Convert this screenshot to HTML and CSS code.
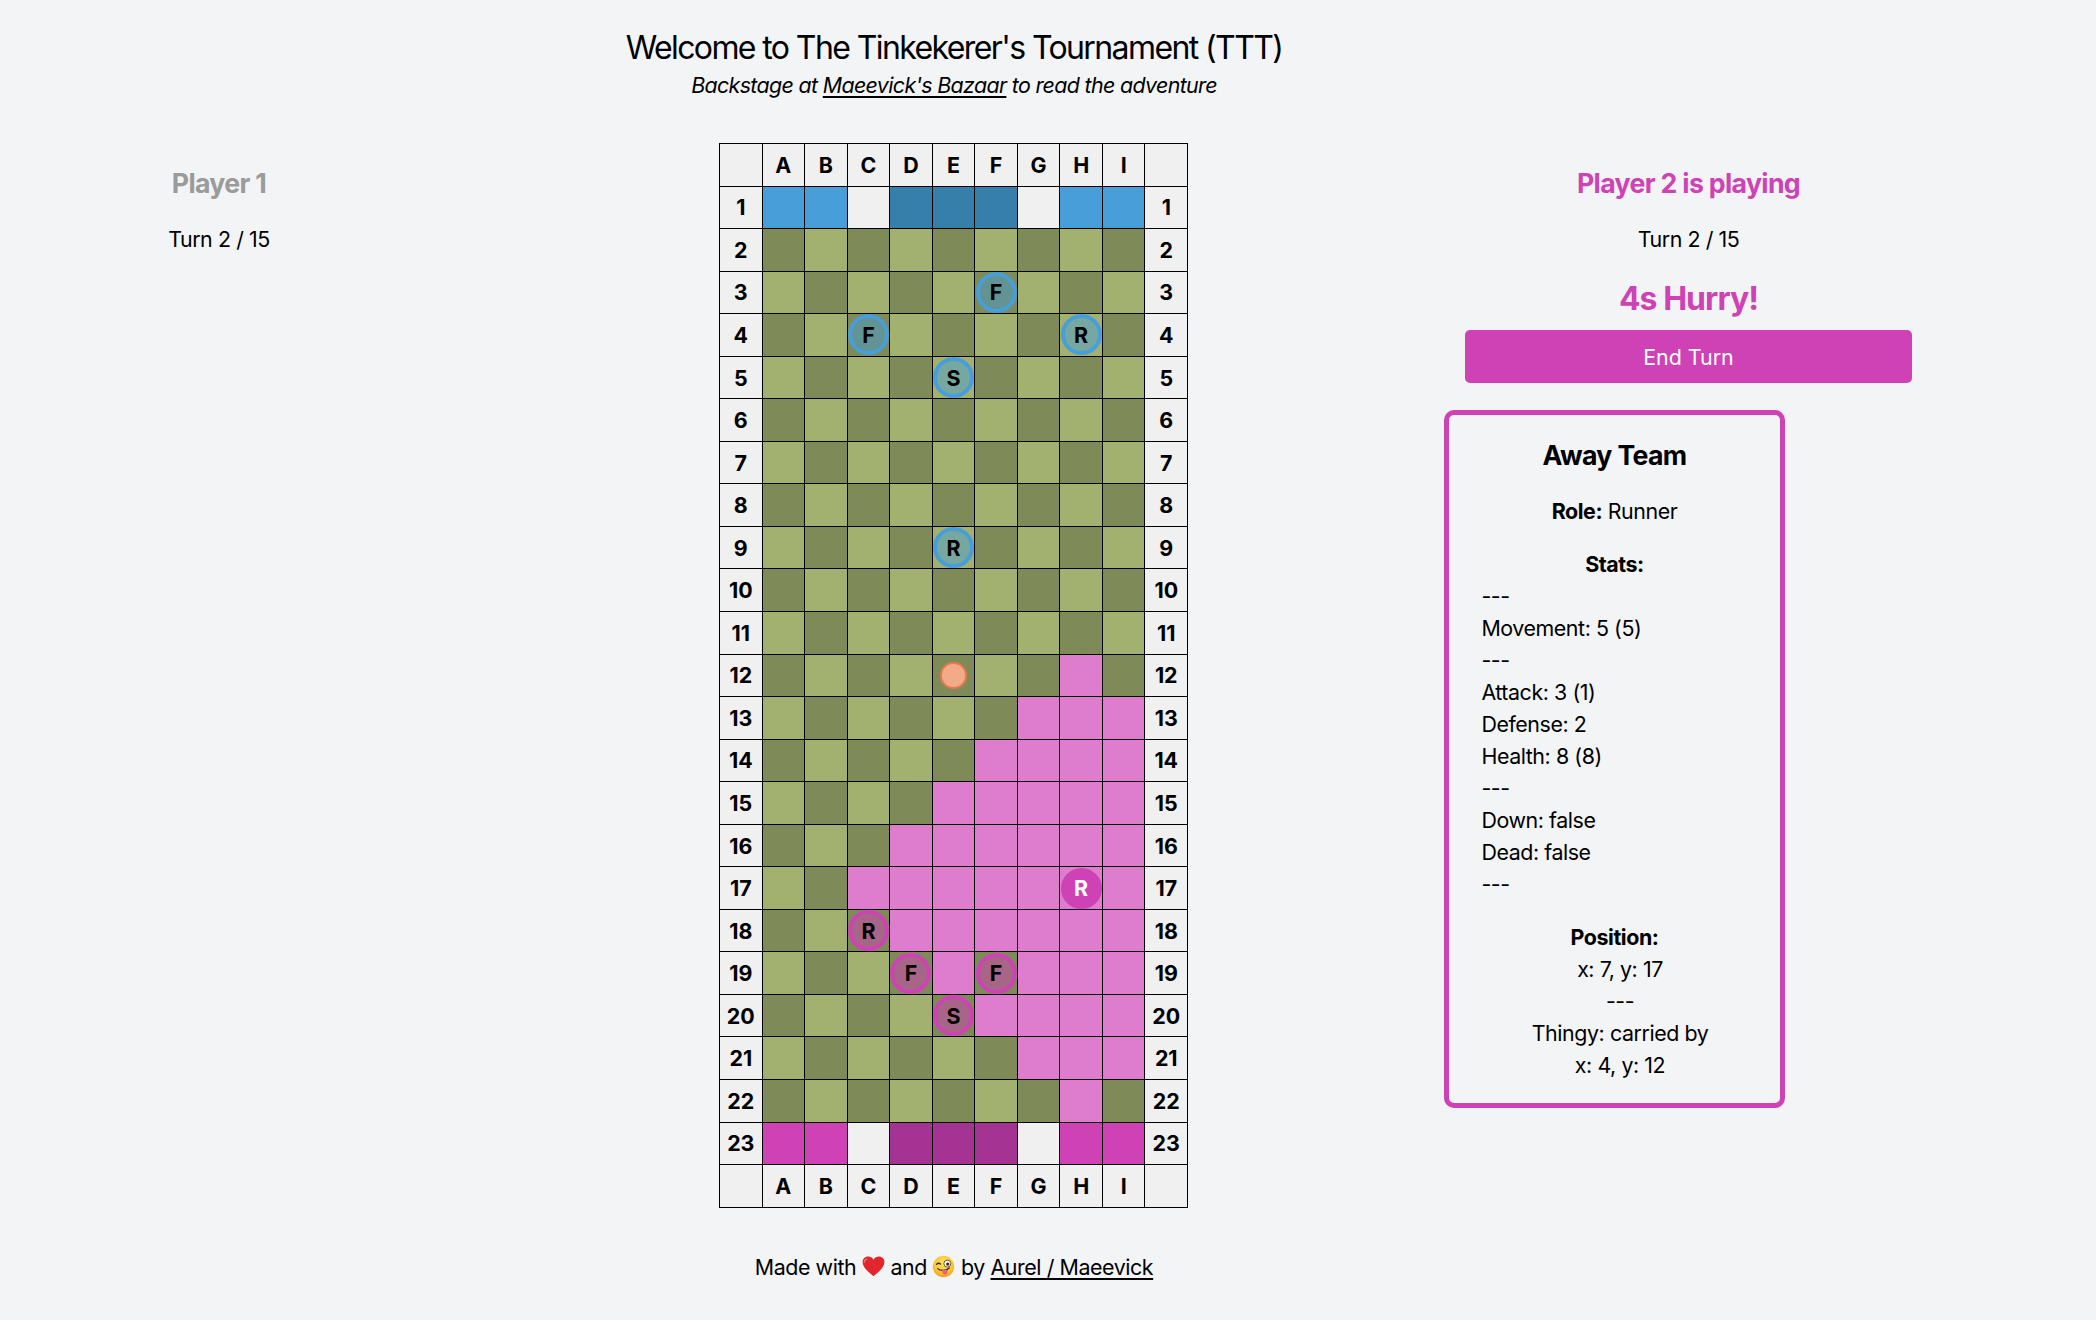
FILE: index.html
```html
<!DOCTYPE html>
<html lang="en">
<head>
<meta charset="utf-8">
<title>The Tinkekerer's Tournament</title>
<link rel="stylesheet" href="styles.css">
</head>
<body>
<header class="intro">
  <h1>Welcome to The Tinkekerer's Tournament (TTT)</h1>
  <p class="tagline">Backstage at <a href="#">Maeevick's Bazaar</a> to read the adventure</p>
</header>

<main class="game">
  <section class="side side-left">
    <h2 class="player-name idle">Player 1</h2>
    <p class="turn">Turn 2 / 15</p>
  </section>

  <div class="board">
    <div class="hd"></div><div class="hd">A</div><div class="hd">B</div><div class="hd">C</div><div class="hd">D</div><div class="hd">E</div><div class="hd">F</div><div class="hd">G</div><div class="hd">H</div><div class="hd">I</div><div class="hd"></div>

    <div class="hd">1</div><div class="sq blue"></div><div class="sq blue"></div><div class="sq empty"></div><div class="sq blue-deep"></div><div class="sq blue-deep"></div><div class="sq blue-deep"></div><div class="sq empty"></div><div class="sq blue"></div><div class="sq blue"></div><div class="hd">1</div>

    <div class="hd">2</div><div class="sq dk"></div><div class="sq lt"></div><div class="sq dk"></div><div class="sq lt"></div><div class="sq dk"></div><div class="sq lt"></div><div class="sq dk"></div><div class="sq lt"></div><div class="sq dk"></div><div class="hd">2</div>

    <div class="hd">3</div><div class="sq lt"></div><div class="sq dk"></div><div class="sq lt"></div><div class="sq dk"></div><div class="sq lt"></div><div class="sq dk"><span class="token home">F</span></div><div class="sq lt"></div><div class="sq dk"></div><div class="sq lt"></div><div class="hd">3</div>

    <div class="hd">4</div><div class="sq dk"></div><div class="sq lt"></div><div class="sq dk"><span class="token home">F</span></div><div class="sq lt"></div><div class="sq dk"></div><div class="sq lt"></div><div class="sq dk"></div><div class="sq lt"><span class="token home">R</span></div><div class="sq dk"></div><div class="hd">4</div>

    <div class="hd">5</div><div class="sq lt"></div><div class="sq dk"></div><div class="sq lt"></div><div class="sq dk"></div><div class="sq lt"><span class="token home">S</span></div><div class="sq dk"></div><div class="sq lt"></div><div class="sq dk"></div><div class="sq lt"></div><div class="hd">5</div>

    <div class="hd">6</div><div class="sq dk"></div><div class="sq lt"></div><div class="sq dk"></div><div class="sq lt"></div><div class="sq dk"></div><div class="sq lt"></div><div class="sq dk"></div><div class="sq lt"></div><div class="sq dk"></div><div class="hd">6</div>

    <div class="hd">7</div><div class="sq lt"></div><div class="sq dk"></div><div class="sq lt"></div><div class="sq dk"></div><div class="sq lt"></div><div class="sq dk"></div><div class="sq lt"></div><div class="sq dk"></div><div class="sq lt"></div><div class="hd">7</div>

    <div class="hd">8</div><div class="sq dk"></div><div class="sq lt"></div><div class="sq dk"></div><div class="sq lt"></div><div class="sq dk"></div><div class="sq lt"></div><div class="sq dk"></div><div class="sq lt"></div><div class="sq dk"></div><div class="hd">8</div>

    <div class="hd">9</div><div class="sq lt"></div><div class="sq dk"></div><div class="sq lt"></div><div class="sq dk"></div><div class="sq lt"><span class="token home">R</span></div><div class="sq dk"></div><div class="sq lt"></div><div class="sq dk"></div><div class="sq lt"></div><div class="hd">9</div>

    <div class="hd">10</div><div class="sq dk"></div><div class="sq lt"></div><div class="sq dk"></div><div class="sq lt"></div><div class="sq dk"></div><div class="sq lt"></div><div class="sq dk"></div><div class="sq lt"></div><div class="sq dk"></div><div class="hd">10</div>

    <div class="hd">11</div><div class="sq lt"></div><div class="sq dk"></div><div class="sq lt"></div><div class="sq dk"></div><div class="sq lt"></div><div class="sq dk"></div><div class="sq lt"></div><div class="sq dk"></div><div class="sq lt"></div><div class="hd">11</div>

    <div class="hd">12</div><div class="sq dk"></div><div class="sq lt"></div><div class="sq dk"></div><div class="sq lt"></div><div class="sq dk"><span class="ball"></span></div><div class="sq lt"></div><div class="sq dk"></div><div class="sq pk"></div><div class="sq dk"></div><div class="hd">12</div>

    <div class="hd">13</div><div class="sq lt"></div><div class="sq dk"></div><div class="sq lt"></div><div class="sq dk"></div><div class="sq lt"></div><div class="sq dk"></div><div class="sq pk"></div><div class="sq pk"></div><div class="sq pk"></div><div class="hd">13</div>

    <div class="hd">14</div><div class="sq dk"></div><div class="sq lt"></div><div class="sq dk"></div><div class="sq lt"></div><div class="sq dk"></div><div class="sq pk"></div><div class="sq pk"></div><div class="sq pk"></div><div class="sq pk"></div><div class="hd">14</div>

    <div class="hd">15</div><div class="sq lt"></div><div class="sq dk"></div><div class="sq lt"></div><div class="sq dk"></div><div class="sq pk"></div><div class="sq pk"></div><div class="sq pk"></div><div class="sq pk"></div><div class="sq pk"></div><div class="hd">15</div>

    <div class="hd">16</div><div class="sq dk"></div><div class="sq lt"></div><div class="sq dk"></div><div class="sq pk"></div><div class="sq pk"></div><div class="sq pk"></div><div class="sq pk"></div><div class="sq pk"></div><div class="sq pk"></div><div class="hd">16</div>

    <div class="hd">17</div><div class="sq lt"></div><div class="sq dk"></div><div class="sq pk"></div><div class="sq pk"></div><div class="sq pk"></div><div class="sq pk"></div><div class="sq pk"></div><div class="sq pk"><span class="token away selected">R</span></div><div class="sq pk"></div><div class="hd">17</div>

    <div class="hd">18</div><div class="sq dk"></div><div class="sq lt"></div><div class="sq dk"><span class="token away">R</span></div><div class="sq pk"></div><div class="sq pk"></div><div class="sq pk"></div><div class="sq pk"></div><div class="sq pk"></div><div class="sq pk"></div><div class="hd">18</div>

    <div class="hd">19</div><div class="sq lt"></div><div class="sq dk"></div><div class="sq lt"></div><div class="sq dk"><span class="token away">F</span></div><div class="sq pk"></div><div class="sq dk"><span class="token away">F</span></div><div class="sq pk"></div><div class="sq pk"></div><div class="sq pk"></div><div class="hd">19</div>

    <div class="hd">20</div><div class="sq dk"></div><div class="sq lt"></div><div class="sq dk"></div><div class="sq lt"></div><div class="sq dk"><span class="token away">S</span></div><div class="sq pk"></div><div class="sq pk"></div><div class="sq pk"></div><div class="sq pk"></div><div class="hd">20</div>

    <div class="hd">21</div><div class="sq lt"></div><div class="sq dk"></div><div class="sq lt"></div><div class="sq dk"></div><div class="sq lt"></div><div class="sq dk"></div><div class="sq pk"></div><div class="sq pk"></div><div class="sq pk"></div><div class="hd">21</div>

    <div class="hd">22</div><div class="sq dk"></div><div class="sq lt"></div><div class="sq dk"></div><div class="sq lt"></div><div class="sq dk"></div><div class="sq lt"></div><div class="sq dk"></div><div class="sq pk"></div><div class="sq dk"></div><div class="hd">22</div>

    <div class="hd">23</div><div class="sq magenta"></div><div class="sq magenta"></div><div class="sq empty"></div><div class="sq magenta-deep"></div><div class="sq magenta-deep"></div><div class="sq magenta-deep"></div><div class="sq empty"></div><div class="sq magenta"></div><div class="sq magenta"></div><div class="hd">23</div>

    <div class="hd"></div><div class="hd">A</div><div class="hd">B</div><div class="hd">C</div><div class="hd">D</div><div class="hd">E</div><div class="hd">F</div><div class="hd">G</div><div class="hd">H</div><div class="hd">I</div><div class="hd"></div>
  </div>

  <section class="side side-right">
    <h2 class="player-name active">Player 2 is playing</h2>
    <p class="turn">Turn 2 / 15</p>
    <p class="hurry">4s Hurry!</p>
    <button class="end-turn" type="button">End Turn</button>
    <article class="card">
      <h3 class="card-title">Away Team</h3>
      <p class="role"><b>Role:</b> Runner</p>
      <p class="section-title">Stats:</p>
      <div class="stats">
        <div>---</div>
        <div>Movement: 5 (5)</div>
        <div>---</div>
        <div>Attack: 3 (1)</div>
        <div>Defense: 2</div>
        <div>Health: 8 (8)</div>
        <div>---</div>
        <div>Down: false</div>
        <div>Dead: false</div>
        <div>---</div>
      </div>
      <p class="section-title pos-title">Position:</p>
      <div class="position">
        <div>x: 7, y: 17</div>
        <div>---</div>
        <div>Thingy: carried by</div>
        <div>x: 4, y: 12</div>
      </div>
    </article>
  </section>
</main>

<footer class="credits">
  Made with
  <svg class="emoji" viewBox="0 0 24 22" aria-label="heart"><path d="M12 21.2C5.2 15.6 0.6 11.4 0.6 6.4 0.6 3 3.2 0.6 6.3 0.6c2.4 0 4.4 1.3 5.7 3.3C13.3 1.9 15.3 0.6 17.7 0.6c3.1 0 5.7 2.4 5.7 5.8 0 5-4.6 9.2-11.4 14.8z" fill="#e2262d"/><path d="M5 3.2c-1.6.4-2.6 1.7-2.6 3.3" stroke="#f4787c" stroke-width="1.2" fill="none" stroke-linecap="round"/></svg>
  and
  <svg class="emoji" viewBox="0 0 24 24" aria-label="winking face with tongue"><defs><radialGradient id="fc" cx="50%" cy="35%" r="65%"><stop offset="0" stop-color="#fde36a"/><stop offset="0.7" stop-color="#f8c533"/><stop offset="1" stop-color="#f09a1e"/></radialGradient></defs><circle cx="12" cy="12" r="11.2" fill="url(#fc)"/><path d="M4.8 9.6c1.2-1 2.8-1.2 4-.2" stroke="#3c2a12" stroke-width="1.4" fill="none" stroke-linecap="round"/><circle cx="16" cy="9" r="3.6" fill="#fff" stroke="#3c2a12" stroke-width="0.8"/><circle cx="16.4" cy="9.4" r="1.7" fill="#3c2a12"/><path d="M6 14.2c2.4 2.6 8.6 2.8 12-.6" stroke="#3c2a12" stroke-width="1.3" fill="none" stroke-linecap="round"/><path d="M10.4 15.6c.2 3 1.2 5 3.2 5s2.8-2 2.6-5z" fill="#ee5f7e"/></svg>
  by <a href="#">Aurel / Maeevick</a>
</footer>
</body>
</html>
```

FILE: styles.css
```css
* {
  box-sizing: border-box;
}

body {
  margin: 0;
  background: #f3f4f6;
  color: #000;
  font-family: Inter, "Noto Sans", "Liberation Sans", sans-serif;
  font-size: 21.4px;
  line-height: 32px;
  letter-spacing: -0.02em;
}

a {
  color: inherit;
  text-decoration: underline;
  text-underline-offset: 3px;
}

p {
  margin: 0;
}

/* Header */
.intro {
  width: 1908px;
  padding-top: 27px;
  text-align: center;
}

.intro h1 {
  margin: 0;
  font-size: 32px;
  line-height: 42px;
  font-weight: 400;
  letter-spacing: -0.05em;
}

.tagline {
  margin-top: 0;
  font-style: italic;
  letter-spacing: -0.03em;
}

/* Main layout */
.game {
  display: flex;
  align-items: flex-start;
  margin-top: 42px;
}

.side {
  text-align: center;
}

.side-left {
  width: 438px;
  padding-top: 21.6px;
}

.side-right {
  width: 489px;
  margin-left: 256px;
  padding-top: 22.3px;
}

.player-name {
  margin: 0;
  font-size: 26.7px;
  line-height: 37.4px;
  font-weight: 700;
  letter-spacing: -0.025em;
}

.player-name.idle {
  color: #9b9b9b;
}

.player-name.active {
  color: #cf42b5;
}

.turn {
  margin-top: 20.6px;
}

.hurry {
  margin-top: 22.4px;
  font-size: 32px;
  line-height: 42.8px;
  font-weight: 700;
  letter-spacing: -0.03em;
  color: #cf42b5;
}

.end-turn {
  display: block;
  width: 447px;
  height: 52.7px;
  margin: 9.9px 0 0 21px;
  border: none;
  border-radius: 5px;
  background: #cf42b5;
  color: #fff;
  font: inherit;
  cursor: pointer;
}

/* Board */
.board {
  margin-left: 281px;
  display: grid;
  grid-template-columns: repeat(11, 41.55px);
  grid-auto-rows: 41.55px;
  gap: 1px;
  padding: 1px;
  background: #000;
  letter-spacing: 0;
}

.hd,
.sq {
  display: flex;
  align-items: center;
  justify-content: center;
}

.hd {
  background: #f0f0f0;
  font-weight: 700;
}

.lt { background: #a2b070; }
.dk { background: #7e8b59; }
.pk { background: #de7dcd; }
.empty { background: #f0f0f0; }
.blue { background: #479ed8; }
.blue-deep { background: #377fab; }
.magenta { background: #cf42b5; }
.magenta-deep { background: #a53393; }

.token {
  width: 41px;
  height: 41px;
  flex: none;
  border-radius: 50%;
  border: 4.5px solid;
  display: flex;
  align-items: center;
  justify-content: center;
  font-weight: 700;
  color: #000;
}

.token.home {
  border-color: #479ed8;
  background: rgba(71, 158, 216, 0.48);
}

.token.away {
  border-color: #cf42b5;
  background: rgba(207, 66, 181, 0.5);
}

.token.away.selected {
  background: #cf42b5;
  color: #fff;
}

.ball {
  width: 26.7px;
  height: 26.7px;
  border-radius: 50%;
  border: 2.7px solid #e9784a;
  background: #f2aa89;
}

/* Card */
.card {
  width: 341px;
  margin-top: 27.3px;
  padding: 21.4px;
  border: 5px solid #cf42b5;
  border-radius: 10px;
  text-align: center;
}

.card-title {
  margin: 0;
  font-size: 26.7px;
  line-height: 37.4px;
  font-weight: 700;
  letter-spacing: -0.025em;
}

.role {
  margin-top: 21.2px;
}

.section-title {
  margin-top: 20.3px;
  font-weight: 700;
}

.stats {
  text-align: left;
  padding-left: 11px;
}

.pos-title {
  margin-top: 21.7px;
}

.position {
  padding-left: 11px;
}

/* Footer */
.credits {
  width: 1908px;
  margin-top: 43px;
  text-align: center;
}

.emoji {
  width: 23px;
  height: 23px;
  vertical-align: -3px;
}
```
